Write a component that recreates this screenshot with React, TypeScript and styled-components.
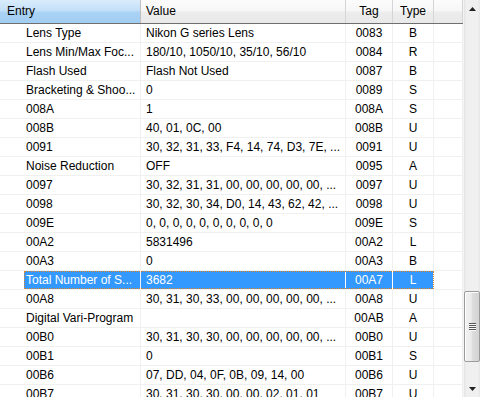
import React from 'react';
import styled, { createGlobalStyle, css } from 'styled-components';

const GlobalStyle = createGlobalStyle`
  html, body {
    margin: 0;
    padding: 0;
    background: #fff;
  }
  body {
    font-family: "Liberation Sans", Arial, sans-serif;
    font-size: 12px;
    color: #000;
  }
`;

const COLS = '141px 205px 47px 41px 29px';

const Frame = styled.div`
  display: flex;
  width: 480px;
  height: 397px;
  overflow: hidden;
`;

const Table = styled.div`
  flex: 1;
  display: flex;
  flex-direction: column;
  overflow: hidden;
`;

const HeaderRow = styled.div`
  display: grid;
  grid-template-columns: ${COLS};
  height: 23px;
  border-bottom: 1px solid #6f6f6f;
  background: linear-gradient(#fcfcfc 0%, #f7f7f7 45%, #ececec 55%, #e9e9e9 100%);
  flex-shrink: 0;
`;

const HeaderCell = styled.div<{ $align?: string; $sorted?: boolean }>`
  display: flex;
  align-items: center;
  justify-content: ${p => p.$align || 'flex-start'};
  padding: 0 5px;
  border-right: 1px solid #d5d5d5;
  line-height: 23px;
  ${p => p.$sorted && css`
    background: linear-gradient(#d9ecfc 0%, #c4e0f8 45%, #a9d2f4 55%, #a1cdf2 100%);
    border-right-color: #c0c0c0;
    padding-left: 7px;
  `}
`;

const Row = styled.div`
  position: relative;
  display: grid;
  grid-template-columns: ${COLS};
  height: 19px;
  flex-shrink: 0;
`;

const Cell = styled.div<{ $align?: string; $selected?: boolean; $indent?: boolean }>`
  height: 18px;
  line-height: 18px;
  border-right: 1px solid #f0f0f0;
  border-bottom: 1px solid #f0f0f0;
  padding: 0 5px;
  text-align: ${p => p.$align || 'left'};
  white-space: nowrap;
  overflow: hidden;
  ${p => p.$indent && css`padding-left: 24px; padding-right: 0;`}
  ${p => p.$selected && css`
    background: #3399ff;
    color: #fff;
    border-right-color: #fff;
  `}
`;

const EntryText = styled.span<{ $selected?: boolean }>`
  display: block;
  height: 18px;
  padding-left: 2px;
  ${p => p.$selected && css`
    background: #3399ff;
    color: #fff;
  `}
`;

const FocusRect = styled.div`
  position: absolute;
  left: 24px;
  top: 0;
  width: 410px;
  height: 18px;
  box-sizing: border-box;
  border: 1px dotted #d9822b;
  pointer-events: none;
`;

const Scrollbar = styled.div`
  width: 17px;
  height: 397px;
  flex-shrink: 0;
  display: flex;
  flex-direction: column;
  background: linear-gradient(90deg, #e3e3e3 0%, #efefef 15%, #f0f0f0 85%, #e6e6e6 100%);
  border-left: 1px solid #f4f4f4;
  box-sizing: border-box;
`;

const ArrowButton = styled.div`
  height: 17px;
  display: flex;
  align-items: center;
  justify-content: center;
  flex-shrink: 0;
`;

const Track = styled.div`
  flex: 1;
  display: flex;
  flex-direction: column;
  justify-content: flex-end;
  padding-bottom: 18px;
`;

const Thumb = styled.div`
  height: 71px;
  margin: 0 0 0 0;
  box-sizing: border-box;
  border: 1px solid #9b9b9b;
  border-radius: 2px;
  background: linear-gradient(90deg, #f2f2f2 0%, #eaeaea 45%, #dcdcdc 55%, #d4d4d4 100%);
  box-shadow: inset 1px 1px 0 #fdfdfd;
  display: flex;
  align-items: center;
  justify-content: center;
`;

const Grip = styled.div`
  width: 7px;
  display: flex;
  flex-direction: column;
  gap: 1px;
  span {
    display: block;
    height: 1px;
    background: #555;
    box-shadow: 0 1px 0 #f8f8f8;
  }
`;

type Item = { entry: string; value: string; tag: string; type: string; selected?: boolean };

const rows: Item[] = [
  { entry: 'Lens Type', value: 'Nikon G series Lens', tag: '0083', type: 'B' },
  { entry: 'Lens Min/Max Foc...', value: '180/10, 1050/10, 35/10, 56/10', tag: '0084', type: 'R' },
  { entry: 'Flash Used', value: 'Flash Not Used', tag: '0087', type: 'B' },
  { entry: 'Bracketing & Shoo...', value: '0', tag: '0089', type: 'S' },
  { entry: '008A', value: '1', tag: '008A', type: 'S' },
  { entry: '008B', value: '40, 01, 0C, 00', tag: '008B', type: 'U' },
  { entry: '0091', value: '30, 32, 31, 33, F4, 14, 74, D3, 7E, ...', tag: '0091', type: 'U' },
  { entry: 'Noise Reduction', value: 'OFF', tag: '0095', type: 'A' },
  { entry: '0097', value: '30, 32, 31, 31, 00, 00, 00, 00, 00, ...', tag: '0097', type: 'U' },
  { entry: '0098', value: '30, 32, 30, 34, D0, 14, 43, 62, 42, ...', tag: '0098', type: 'U' },
  { entry: '009E', value: '0, 0, 0, 0, 0, 0, 0, 0, 0, 0', tag: '009E', type: 'S' },
  { entry: '00A2', value: '5831496', tag: '00A2', type: 'L' },
  { entry: '00A3', value: '0', tag: '00A3', type: 'B' },
  { entry: 'Total Number of S...', value: '3682', tag: '00A7', type: 'L', selected: true },
  { entry: '00A8', value: '30, 31, 30, 33, 00, 00, 00, 00, 00, ...', tag: '00A8', type: 'U' },
  { entry: 'Digital Vari-Program', value: '', tag: '00AB', type: 'A' },
  { entry: '00B0', value: '30, 31, 30, 30, 00, 00, 00, 00, 00, ...', tag: '00B0', type: 'U' },
  { entry: '00B1', value: '0', tag: '00B1', type: 'S' },
  { entry: '00B6', value: '07, DD, 04, 0F, 0B, 09, 14, 00', tag: '00B6', type: 'U' },
  { entry: '00B7', value: '30, 31, 30, 30, 00, 00, 02, 01, 01', tag: '00B7', type: 'U' },
];

const Triangle = ({ down }: { down?: boolean }) => (
  <svg width="7" height="4" viewBox="0 0 7 4">
    <path d={down ? 'M0 0 L7 0 L3.5 4 Z' : 'M3.5 0 L7 4 L0 4 Z'} fill="#222" />
  </svg>
);

export default function App() {
  return (
    <Frame>
      <GlobalStyle />
      <Table>
        <HeaderRow>
          <HeaderCell $sorted>Entry</HeaderCell>
          <HeaderCell>Value</HeaderCell>
          <HeaderCell $align="center">Tag</HeaderCell>
          <HeaderCell $align="center">Type</HeaderCell>
          <HeaderCell />
        </HeaderRow>
        {rows.map(r => (
          <Row key={r.tag}>
            <Cell $indent>
              <EntryText $selected={r.selected}>{r.entry}</EntryText>
            </Cell>
            <Cell $selected={r.selected}>{r.value}</Cell>
            <Cell $align="center" $selected={r.selected}>{r.tag}</Cell>
            <Cell $align="center" $selected={r.selected}>{r.type}</Cell>
            <Cell />
            {r.selected && <FocusRect />}
          </Row>
        ))}
      </Table>
      <Scrollbar>
        <ArrowButton><Triangle /></ArrowButton>
        <Track>
          <Thumb>
            <Grip><span /><span /><span /><span /></Grip>
          </Thumb>
        </Track>
        <ArrowButton><Triangle down /></ArrowButton>
      </Scrollbar>
    </Frame>
  );
}
